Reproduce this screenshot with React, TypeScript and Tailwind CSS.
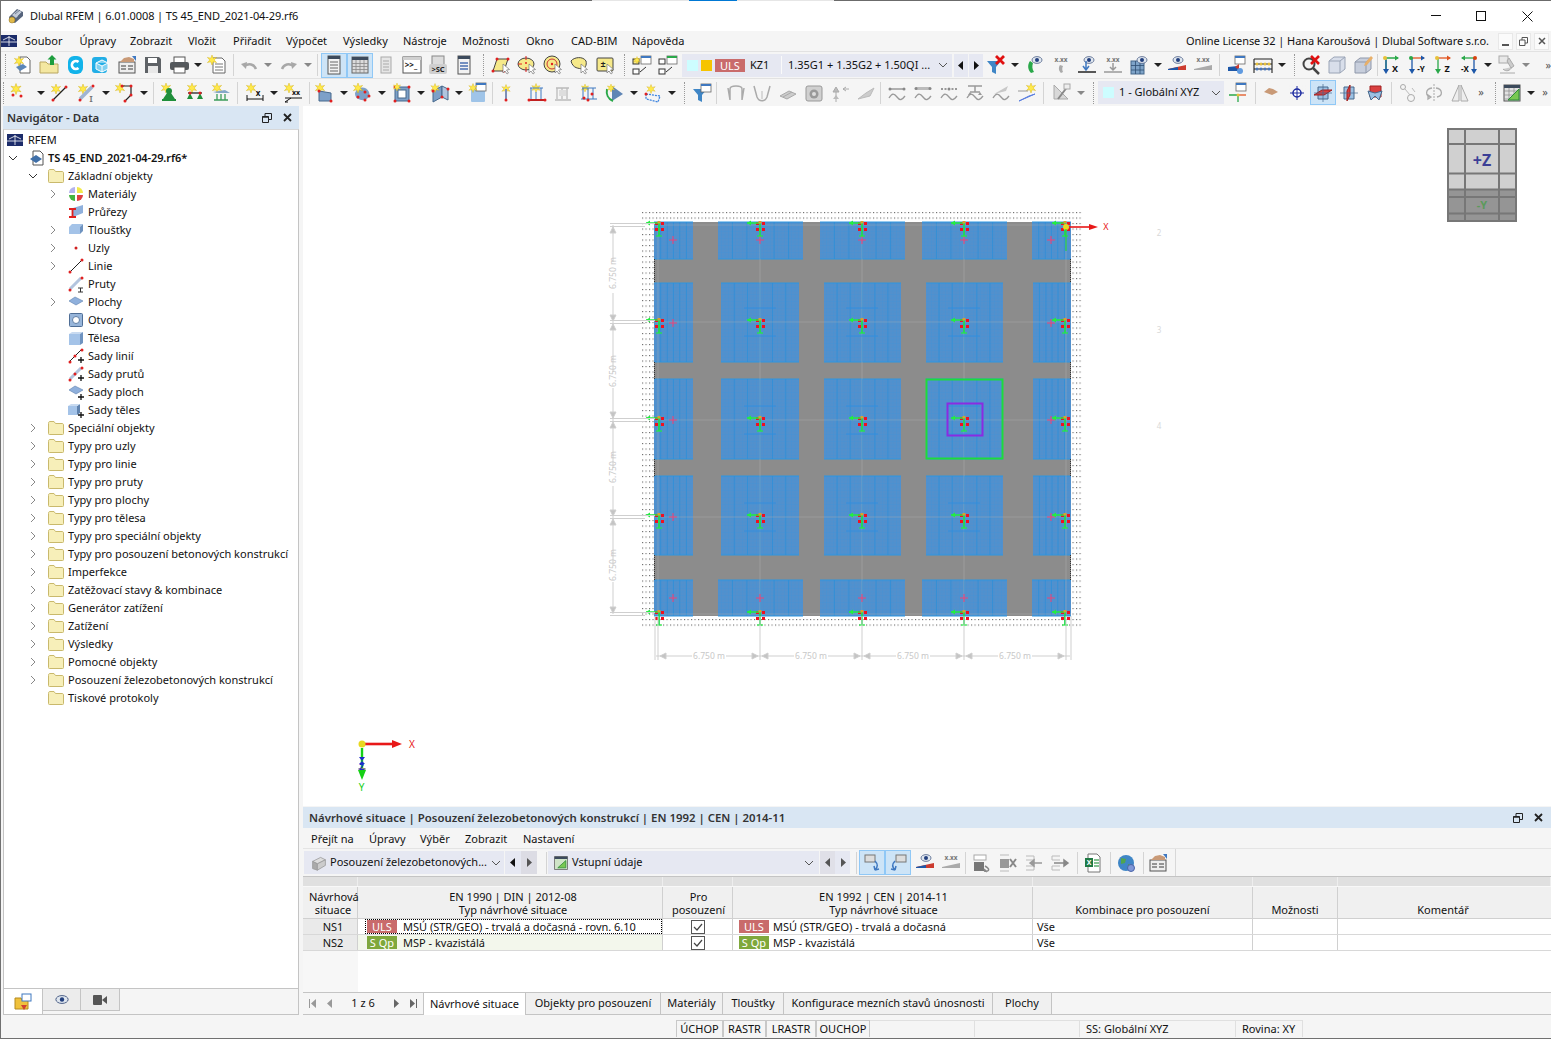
import React from "react";

const St = ({ x = 5, y = 5, s = 1 }: { x?: number; y?: number; s?: number }) => (
  <path transform={`translate(${x} ${y}) scale(${s})`} fill="#ffe94a" stroke="#cfa800" strokeWidth=".4" d="M0-5 1.2-1.8 4.6-2.6 2.2 0 4.6 2.6 1.2 1.8 0 5-1.2 1.8-4.6 2.6-2.2 0-4.6-2.6-1.2-1.8Z" />
);
const Dt = ({ x, y, c = "#e02020", r = 1.5 }: { x: number; y: number; c?: string; r?: number }) => <circle cx={x} cy={y} r={r} fill={c} />;
const Cur = () => <path d="M12 9l0 9 2-2 2 3 1.5-1-2-3 3-.5z" fill="#fff" stroke="#777" strokeWidth=".7" />;
const T = ({ x, y, s = 6.5, c = "#666", w = 700, t }: { x: number; y: number; s?: number; c?: string; w?: number; t: string }) => (
  <text x={x} y={y} fontSize={s} fill={c} fontWeight={w} textAnchor="middle">{t}</text>
);
const Xx = ({ c = "#777" }: { c?: string }) => <T x={10} y={7} t="x.xx" c={c} />;
const wave = (c: string) => <path d="M2 15c3-5 5-5 8-1s5 3 8-1" fill="none" stroke={c} strokeWidth="1.3" />;
const Win = ({ x = 9, y = 1, c = "#3f78c0" }: { x?: number; y?: number; c?: string }) => (
  <g><rect x={x} y={y} width="10" height="8" fill="#fff" stroke="#666" strokeWidth=".8" /><rect x={x} y={y} width="10" height="2" fill={c} /></g>
);
const Eye = ({ x = 13, y = 4 }: { x?: number; y?: number }) => (
  <g><ellipse cx={x} cy={y} rx="5" ry="3.4" fill="#dfe6ee" stroke="#3a4f7a" strokeWidth=".7" /><circle cx={x} cy={y} r="2" fill="#23407e" /></g>
);

const I: Record<string, React.ReactNode> = {
  newdoc: <><path d="M7 2h7l3 3v13H7z" fill="#fff" stroke="#666" /><path d="M3 12l7-3 4 3-7 4z" fill="#5b86b8" /><St x={6} y={6} /></>,
  open: <><path d="M1 7h6l2 2h10v9H1z" fill="#f4e7a1" stroke="#b9a660" /><path d="M13 0l4.5 4.5H15V10h-4V4.500H8.500z" fill="#1e9e3e" /></>,
  cee: <><rect x="3" y="1" width="15" height="18" rx="6" fill="#12b3ea" /><path d="M13.500 7a4 4 0 1 0 0 6" fill="none" stroke="#fff" strokeWidth="2.600" /></>,
  cubeI: <><rect x="1" y="2" width="15" height="16" rx="3" fill="#22aee6" /><path d="M11 5l6 3v6l-6 3-6-3V8zM11 11v6M5 8l6 3 6-3" fill="#7fd0f0" stroke="#fff" /></>,
  hand: <><rect x="2" y="7" width="16" height="11" fill="#eee" stroke="#555" /><path d="M4 11h5M11 11h5M4 14h5M11 14h5" stroke="#777" strokeWidth="1.500" /><path d="M3 7l4-4 5-1 5 2v3z" fill="#c99a77" /><path d="M15 1h4v5z" fill="#3f78c0" /></>,
  save: <><path d="M2 2h14l2 2v14H2z" fill="#5e6266" /><rect x="5" y="3" width="9" height="5" fill="#fff" /><rect x="5" y="11" width="10" height="7" fill="#e8e8e8" /></>,
  print: <><rect x="5" y="2" width="11" height="6" fill="#fff" stroke="#555" /><rect x="1" y="7" width="19" height="8" rx="2" fill="#55595d" /><rect x="5" y="12" width="11" height="6" fill="#fff" stroke="#555" /></>,
  newrep: <><path d="M6 3h9l3 3v12H6z" fill="#fff" stroke="#666" /><path d="M8 9h8M8 12h8M8 15h8" stroke="#777" /><St x={5} y={5} /></>,
  undo: <><path d="M17 14c-2-5-7-6-12-3" fill="none" stroke="#a8a8a8" strokeWidth="2.500" /><path d="M2 9l6-2-1 7z" fill="#a8a8a8" /></>,
  redo: <><path d="M3 14c2-5 7-6 12-3" fill="none" stroke="#a8a8a8" strokeWidth="2.500" /><path d="M18 9l-6-2 1 7z" fill="#a8a8a8" /></>,
  win: <><rect x="4" y="1" width="12" height="18" fill="#f2f2f2" stroke="#555" /><rect x="4" y="1" width="12" height="3" fill="#3c4a5c" /><path d="M6 7h8M6 10h8M6 13h8M6 16h8" stroke="#666" /></>,
  tbl: <><rect x="2" y="2" width="16" height="16" fill="#dcdcdc" stroke="#666" /><rect x="2" y="2" width="16" height="3" fill="#3c4a5c" /><path d="M2 8.500h16M2 11.500h16M2 14.500h16M6 5v13M10 5v13M14 5v13" stroke="#888" strokeWidth=".8" /></>,
  docg: <><rect x="5" y="2" width="10" height="16" fill="#e6e6e6" stroke="#aaa" /><path d="M7 6h6M7 9h6M7 12h6M7 15h6" stroke="#aaa" /></>,
  con: <><rect x="1" y="2" width="18" height="16" fill="#fff" stroke="#555" /><rect x="1" y="2" width="18" height="3" fill="#d0d0d0" /><T x={9} y={13} s={8} c="#222" t=">>_" /></>,
  sc: <><rect x="4" y="1" width="12" height="9" fill="#ddd" stroke="#888" /><rect x="1" y="9" width="18" height="10" rx="2" fill="#cfcfcf" /><T x={10} y={17} s={7.500} c="#222" t=">SC" /></>,
  lst: <><rect x="4" y="1" width="12" height="18" fill="#f2f2f2" stroke="#555" /><rect x="4" y="1" width="12" height="3" fill="#3c4a5c" /><path d="M6 8h8M6 11h8M6 14h8" stroke="#4a6fb0" strokeWidth="1.500" /></>,
  para: <><path d="M6 4h11l-4 12H2z" fill="#f6e98a" stroke="#444" /><Dt x={6} y={4} /><Dt x={17} y={4} /><Dt x={2} y={16} /><Dt x={13} y={16} /><Cur /></>,
  cir: <><ellipse cx="9" cy="9" rx="8" ry="6" fill="#f6e98a" stroke="#444" /><path d="M9 1v4M9 12v5M1 9h4" stroke="#e02020" /><Dt x={9} y={8} r={1} /><Cur /></>,
  tgt: <><circle cx="9" cy="9" r="8" fill="#f6e98a" stroke="#444" /><circle cx="9" cy="9" r="5" fill="none" stroke="#c33" /><Dt x={9} y={9} r={1.200} /><Cur /></>,
  blob: <><path d="M2 6c3-4 12-5 15 0 1 4-1 8-4 8-3-1-9 0-11-8z" fill="#f6e98a" stroke="#444" /><Cur /></>,
  yel: <><rect x="2" y="3" width="16" height="13" rx="1" fill="#f6e98a" stroke="#444" /><T x={8} y={12} s={9} c="#222" t="±" /><Cur /></>,
  conn1: <><Win /><rect x="1" y="14" width="6" height="5" fill="#fff" stroke="#333" /><rect x="1" y="4" width="6" height="5" fill="#f6e98a" stroke="#333" /><path d="M8 17l6-5" stroke="#333" /><St x={5} y={5} s={.7} /></>,
  conn2: <><Win c="#2aa84a" /><rect x="1" y="14" width="6" height="5" fill="#fff" stroke="#333" /><rect x="1" y="4" width="6" height="5" fill="#fff" stroke="#333" /><path d="M8 17l6-5" stroke="#333" /></>,
  fil: <><path d="M1 6h14l-5 6v7l-4-2v-5z" fill="#3f86c6" /><path d="M10 1l8 8M18 1l-8 8" stroke="#e01010" strokeWidth="2.800" /></>,
  eyeb: <><path d="M5 6c-3 4-2 9 1 12l3-1c-2-3-2-6-1-9z" fill="#2aa84a" /><Eye x={12} y={5} /></>,
  xc: <><Xx /><path d="M9 10c-2 3-1 6 1 8l2-1c-1-2-1-4 0-6z" fill="#aaa" /></>,
  le: <><Eye x={12} y={5} /><path d="M9 6v8M6 11l3 4 3-4" fill="none" stroke="#3f78c0" strokeWidth="1.500" /><path d="M1 17h18" stroke="#222" strokeWidth="1.500" /></>,
  lg: <><Xx /><path d="M10 8v7M7 12l3 3 3-3" fill="none" stroke="#999" strokeWidth="1.500" /><path d="M1 17h18" stroke="#999" strokeWidth="1.500" /></>,
  ge: <><rect x="2" y="6" width="13" height="13" fill="#7ea3c8" stroke="#46688c" /><path d="M2 10.500h13M2 15h13M6.500 6v13M11 6v13" stroke="#2e4e72" strokeWidth=".8" /><Eye x={13} y={5} /></>,
  le2: <><Eye x={11} y={5} /><path d="M1 14l18-4v5H1z" fill="#cc3b2f" /><path d="M1 14l10-2v3H1z" fill="#1d57a8" /></>,
  lg2: <><Xx /><path d="M1 14l18-4v5H1z" fill="#aaa" /></>,
  wb: <><Win x={8} y={1} /><path d="M1 12l10-1v5H1z" fill="#1d57a8" /><path d="M8 12l4-3v6z" fill="#cc3b2f" /><circle cx="13" cy="16" r="3" fill="#5f9ae0" /></>,
  aba: <><path d="M1 4h18M1 18V4M19 18V4M1 9h18M1 14h18" stroke="#222" strokeWidth="1.100" fill="none" /><path d="M4 9h.01M8 9h.01M12 9h.01M16 9h.01" stroke="#e8c13a" strokeWidth="3" strokeLinecap="round" /><path d="M4 14h.01M8 14h.01M12 14h.01M16 14h.01" stroke="#4a76b8" strokeWidth="3" strokeLinecap="round" /></>,
  magx: <><circle cx="8" cy="9" r="5.500" fill="#f4f4f4" stroke="#444" strokeWidth="2" /><path d="M12 13l6 6" stroke="#444" strokeWidth="2.500" /><path d="M10 1l8 8M18 1l-8 8" stroke="#e01010" strokeWidth="2.600" /></>,
  cube1: <><path d="M2 6l5-4h11v12l-5 4H2z" fill="#d8deea" stroke="#9aa4b6" /><path d="M2 6h11v12M13 6l5-4" fill="none" stroke="#9aa4b6" /></>,
  cube2: <><path d="M2 7l5-4h11v11l-5 4H2z" fill="#c7cedc" stroke="#8f98aa" /><path d="M2 7h11v11M13 7l5-4" fill="none" stroke="#8f98aa" /><path d="M18 1l-6 7-1 3 3-1 6-7z" fill="#e8b06a" /></>,
  ax1: <><path d="M5 3v14M5 3h12" stroke="#2aa84a" strokeWidth="1.300" /><path d="M5 19l-3-5h6z" fill="#1d57a8" /><path d="M5 5v10" stroke="#1d57a8" strokeWidth="1.300" /><path d="M18 3l-4-2.500v5z" fill="#2aa84a" /><Dt x={4} y={3} c="#e8c13a" r={2} /><T x={14} y={17} s={9} c="#111" t="X" /></>,
  ax2: <><path d="M5 3h12" stroke="#e0541f" strokeWidth="1.300" /><path d="M5 3v12" stroke="#1d57a8" strokeWidth="1.300" /><path d="M5 19l-3-5h6zM18 3l-4-2.500v5z" fill="#1d57a8" /><Dt x={4} y={3} c="#2aa84a" r={2} /><T x={14} y={17} s={8} c="#111" t="-Y" /></>,
  ax3: <><path d="M5 3h12" stroke="#e0541f" strokeWidth="1.300" /><path d="M5 3v12" stroke="#2aa84a" strokeWidth="1.300" /><path d="M5 19l-3-5h6z" fill="#2aa84a" /><path d="M18 3l-4-2.500v5z" fill="#e0541f" /><Dt x={4} y={3} c="#e8c13a" r={2} /><T x={14} y={17} s={9} c="#111" t="Z" /></>,
  ax4: <><path d="M3 3h12" stroke="#2aa84a" strokeWidth="1.300" /><path d="M15 3v12" stroke="#1d57a8" strokeWidth="1.300" /><path d="M15 19l-3-5h6z" fill="#1d57a8" /><path d="M2 3l4-2.500v5z" fill="#2aa84a" /><Dt x={16} y={3} c="#d8420f" r={2} /><T x={6} y={17} s={8} c="#111" t="-X" /></>,
  micro: <><rect x="2" y="1" width="9" height="7" fill="#e8e8e8" stroke="#aaa" /><path d="M12 3l5 8-3 2-4-7zM3 18h15M6 14c3 3 7 2 9-2" fill="#ccc" stroke="#aaa" /></>,
  star: <><St x={7} y={6} s={1.100} /><Dt x={4} y={12} /><Dt x={12} y={13} /></>,
  line: <><St x={6} y={6} /><path d="M3 17L16 4" stroke="#222" strokeWidth="1.200" /><Dt x={3} y={17} /><Dt x={16} y={4} /></>,
  mem: <><St x={6} y={6} /><path d="M3 16L15 4" stroke="#9fb4d2" strokeWidth="3.500" /><Dt x={3} y={17} /><Dt x={16} y={3} /><T x={14} y={19} s={8} c="#777" t="I" /></>,
  clp: <><St x={5} y={5} /><path d="M7 3h9v9l-6 6" fill="none" stroke="#222" strokeWidth="1.200" /><Dt x={7} y={3} /><Dt x={16} y={3} /><Dt x={16} y={12} /><Dt x={10} y={18} /></>,
  sup: <><St x={7} y={5} /><path d="M10 7l6 9H4z" fill="#1f8f3a" /><circle cx="10" cy="8" r="3" fill="#1f8f3a" /><path d="M3 17h14" stroke="#1f8f3a" strokeWidth="2" /></>,
  sup2: <><St x={7} y={5} /><path d="M3 10h14" stroke="#222" strokeWidth="1.300" /><path d="M5 10l3 6H2zM15 10l3 6h-6z" fill="#1f8f3a" /><Dt x={5} y={10} /><Dt x={15} y={10} /></>,
  sup3: <><St x={6} y={5} /><path d="M2 9l12-2 5 3H6z" fill="#86a8c8" /><path d="M6 11v6M10 11v6M14 11v6M3 17h14" stroke="#3d9c5a" strokeWidth="1.300" /></>,
  dimx: <><St x={6} y={5} /><T x={13} y={13} s={8} c="#111" t="x" /><path d="M2 12v6M18 12v6M2 16h16" stroke="#111" /></>,
  dimxx: <><St x={6} y={5} /><T x={13} y={12} s={7} c="#111" t="xx" /><path d="M2 15h17M2 19l6-4M2 19l3 0" stroke="#111" /></>,
  surf: <><St x={5} y={5} /><path d="M4 8l12 2v8H4z" fill="#7da0c8" stroke="#46688c" /><Dt x={4} y={8} /><Dt x={16} y={18} /></>,
  surf2: <><path d="M2 10c3-7 11-7 14-1 2 5-3 9-8 8-4-1-6-3-6-7z" fill="#7da0c8" /><St x={5} y={5} /><Dt x={5} y={14} /><Dt x={12} y={9} /><Dt x={16} y={13} /><Dt x={12} y={17} /></>,
  opn: <><rect x="3" y="4" width="14" height="14" fill="#7da0c8" stroke="#46688c" /><rect x="6" y="7" width="8" height="8" fill="#fff" stroke="#46688c" /><Dt x={3} y={4} /><Dt x={17} y={4} /><Dt x={3} y={18} /><Dt x={17} y={18} /><St x={5} y={4} s={.8} /></>,
  sol2: <><path d="M3 8l9-5v11l-9 5z" fill="#7da0c8" stroke="#46688c" /><path d="M12 3l6 3v11l-6-3z" fill="#b0c4de" stroke="#46688c" /><St x={5} y={5} s={.9} /><Dt x={3} y={8} /><Dt x={12} y={14} /><Dt x={18} y={6} /></>,
  box: <><rect x="3" y="5" width="14" height="14" rx="1" fill="#9fc4e8" /><Win x={8} y={0} /><St x={5} y={5} s={.9} /></>,
  pin: <><St x={8} y={6} s={.9} /><path d="M8 6v10" stroke="#7d8fb5" strokeWidth="2" /><Dt x={8} y={17} /></>,
  brg: <><St x={9} y={5} s={.9} /><path d="M2 17h16" stroke="#c02020" strokeWidth="2" /><path d="M4 5v11M9 9v7M14 5v11M3 5h13" stroke="#3f78c0" fill="none" /><Dt x={2} y={17} /><Dt x={18} y={17} /></>,
  brgg: <><path d="M2 17h16M4 5v11M9 5v11M14 5v11M3 5h13" stroke="#bbb" strokeWidth="1.300" fill="none" /><rect x="6" y="7" width="7" height="6" fill="#ddd" /></>,
  brg2: <><St x={6} y={5} s={.8} /><path d="M4 5v11M9 5v11M14 5v11M3 5h14M2 16h16" stroke="#3f78c0" fill="none" /><Dt x={5} y={15} /><Dt x={13} y={11} /><Dt x={9} y={17} /></>,
  tri: <><path d="M7 3l11 8-11 7z" fill="#5f85b5" /><path d="M2 6c-1 5 1 10 6 12" fill="none" stroke="#2aa84a" strokeWidth="2" /><St x={6} y={5} s={.8} /></>,
  dash: <><St x={8} y={6} s={.9} /><path d="M3 11l14 2-2 6-12-3z" fill="none" stroke="#3f86e0" strokeDasharray="2 1" strokeWidth="1.300" /><Dt x={3} y={11} /></>,
  filw: <><path d="M1 6h14l-5 6v7l-4-2v-5z" fill="#3f86c6" /><Win /></>,
  g1: <><path d="M4 17V6c0-4 12-4 12 0v11M2 5l2 12M18 5l-2 12" fill="none" stroke="#aaa" strokeWidth="1.500" /></>,
  g2: <><path d="M2 3l3 11c2 5 8 5 10 0l3-11" fill="none" stroke="#aaa" strokeWidth="1.500" /><path d="M10 8v8" stroke="#bbb" /></>,
  g3: <><path d="M2 13l9-5 7 3-9 5zM5 14l9-5" fill="#ccc" stroke="#aaa" /></>,
  g4: <><rect x="2" y="3" width="16" height="15" rx="2" fill="#d0d0d0" stroke="#999" /><circle cx="10" cy="11" r="4.500" fill="#999" /><circle cx="10" cy="11" r="2" fill="#ddd" /></>,
  g5: <><path d="M6 4l3 5H3zM6 9v10M13 6h6M13 6l3-2M13 6l3 2" stroke="#aaa" fill="#bbb" /><path d="M6 12l3 4H3z" fill="#bbb" /></>,
  g6: <><path d="M2 16l8-6 8-5-4 8z" fill="#ccc" stroke="#bbb" /></>,
  w1: <><path d="M2 6h16" stroke="#999" strokeWidth="1.500" /><Dt x={3} y={6} c="#888" /><Dt x={17} y={6} c="#888" />{wave("#999")}</>,
  w2: <><rect x="3" y="4" width="14" height="3" fill="#bbb" /><Dt x={3} y={5.500} c="#888" /><Dt x={17} y={5.500} c="#888" />{wave("#999")}</>,
  w3: <><path d="M2 6h16" stroke="#999" strokeDasharray="2 1.500" strokeWidth="2" /><Dt x={10} y={6} c="#888" />{wave("#999")}</>,
  w4: <><path d="M3 3h14M10 3v6M5 9h10" stroke="#999" strokeWidth="1.500" /><path d="M5 9l-2 3h4zM15 9l-2 3h4z" fill="#999" />{wave("#999")}</>,
  w5: <><path d="M3 11l14-8-2 5z" fill="#c8c8c8" />{wave("#999")}</>,
  w6: <><St x={14} y={5} /><path d="M1 8h10" stroke="#999" /><path d="M2 18l16-7-6 2z" fill="#5b7fe0" stroke="#5b7fe0" /></>,
  gset: <><path d="M2 2l14 14H2z" fill="#d8d8d8" stroke="#aaa" /><path d="M16 3L6 16" stroke="#888" strokeWidth="2" /><rect x="12" y="1" width="6" height="5" fill="#eee" stroke="#aaa" /></>,
  cs: <><Win x={8} y={0} /><path d="M10 12H1M10 12v7" stroke="#2aa84a" strokeWidth="1.300" /><path d="M10 12h8" stroke="#e0541f" strokeWidth="1.300" /><Dt x={10} y={12} c="#e8c13a" /></>,
  hg: <><path d="M3 9l5-4 4 1 5 3-6 3z" fill="#c99a77" /><path d="M2 11h.01M5 11h.01M8 11h.01M11 11h.01M14 11h.01M17 11h.01M2 14h.01M5 14h.01M8 14h.01M11 14h.01M14 14h.01M17 14h.01M2 17h.01M5 17h.01M8 17h.01M11 17h.01M14 17h.01M17 17h.01" stroke="#666" strokeWidth="1.600" /></>,
  hg2: <><path d="M2 3h.01M5 3h.01M8 3h.01M12 3h.01M15 3h.01M18 3h.01M2 6h.01M5 6h.01M15 6h.01M18 6h.01M2 14h.01M5 14h.01M15 14h.01M18 14h.01M2 17h.01M5 17h.01M8 17h.01M12 17h.01M15 17h.01M18 17h.01" stroke="#777" strokeWidth="1.500" /><circle cx="10" cy="10" r="4" fill="#fff" stroke="#1c2aa0" strokeWidth="1.500" /><path d="M10 3v14M3 10h14" stroke="#1c2aa0" /></>,
  vw1: <><path d="M5 4l10 0 0 12-10 0z" fill="#9cc1e3" stroke="#46688c" /><path d="M1 12l8-5h10l-8 5z" fill="#d94040" stroke="#a02020" /><path d="M10 1v18M1 10h18" stroke="#46688c" strokeWidth=".7" /></>,
  vw2: <><path d="M5 4h10v12H5z" fill="#9cc1e3" stroke="#46688c" /><path d="M11 2l-3 6v10l3-6z" fill="#d94040" stroke="#a02020" /><path d="M1 10h18" stroke="#46688c" strokeWidth=".7" /></>,
  vw3: <><path d="M5 3h11v11H5z" fill="#d94040" stroke="#a02020" /><path d="M3 8l7 2 7-2-3 9-4-4-4 4z" fill="#9cc1e3" stroke="#46688c" /></>,
  gn1: <><circle cx="5" cy="4" r="2.500" fill="none" stroke="#aaa" /><circle cx="13" cy="15" r="3.500" fill="none" stroke="#aaa" /><path d="M7 6l5 6M14 5l3 4" stroke="#bbb" /></>,
  gn2: <><path d="M10 1v18" stroke="#aaa" strokeDasharray="2 1" /><path d="M8 5C1 6 1 13 7 14M7 14l-3-2v4zM12 5c7 1 7 8 1 9" fill="none" stroke="#aaa" strokeWidth="1.300" /></>,
  gn3: <><path d="M9 2L2 18h7zM11 2l7 16h-7z" fill="#eee" stroke="#aaa" /></>,
  tb3: <><rect x="2" y="2" width="16" height="16" fill="#e2e2e2" stroke="#555" /><rect x="2" y="2" width="16" height="3" fill="#3c4a5c" /><path d="M2 8h16M2 12h16M2 16h16M7 5v13M12 5v13" stroke="#888" strokeWidth=".7" /><path d="M17 6v11H6z" fill="#79c853" stroke="#2e8b3a" /></>,
  cube3: <><path d="M2 8l10-5 6 3-10 5z" fill="#ddd" stroke="#999" /><path d="M2 8v9l6 2v-8z" fill="#aaa" stroke="#999" /><path d="M8 11v8l10-6V6z" fill="#ccc" stroke="#999" /></>,
  gb1: <><rect x="2" y="2" width="12" height="5" fill="#fff" stroke="#aaa" /><rect x="2" y="9" width="10" height="9" fill="#777" /><path d="M13 13c5 3 5 6-1 5M12 16l3 3" fill="none" stroke="#888" strokeWidth="1.500" /></>,
  gb2: <><path d="M2 2h9M2 18h9" stroke="#bbb" /><rect x="2" y="6" width="9" height="9" fill="#999" /><path d="M12 6l6 8M18 6l-6 8" stroke="#888" strokeWidth="2" /></>,
  gb3: <><path d="M2 3h8M2 17h8M2 7h8M2 13h8M10 3v4M10 13v4" stroke="#bbb" /><path d="M18 10H6M6 10l4-3v6z" stroke="#999" fill="#999" strokeWidth="1.500" /></>,
  gb4: <><path d="M2 3h8M2 17h8M2 7h8M2 13h8M2 3v4M2 13v4" stroke="#bbb" /><path d="M4 10h12M18 10l-4-3v6z" stroke="#888" fill="#888" strokeWidth="1.500" /></>,
  xls: <><path d="M5 1h9l3 3v15H5z" fill="#fff" stroke="#777" /><rect x="2" y="5" width="8" height="9" fill="#1f7a44" /><T x={6} y={12} s={7} c="#fff" t="X" /><path d="M11 7h5M11 10h5M11 13h5" stroke="#5fae6f" strokeWidth="1.500" /></>,
  globe: <><circle cx="10" cy="10" r="8" fill="#3f86c6" /><path d="M5 5l5 1-1 4-4 1zM12 11l4 1-2 4-2-2z" fill="#4fa54f" /><circle cx="15" cy="15" r="3.500" fill="#7f97d8" stroke="#4a64a8" /></>,
  sel1: <><rect x="3" y="2" width="10" height="7" fill="#ddd" stroke="#777" /><path d="M13 8c3 3 3 6 0 9M13 17l-1-4M13 17l4-1" fill="none" stroke="#3f78c0" strokeWidth="1.500" /></>,
  sel2: <><rect x="8" y="2" width="10" height="7" fill="#ddd" stroke="#777" /><path d="M7 8c-3 3-3 6 0 9M7 17l1-4M7 17l-4-1" fill="none" stroke="#3f78c0" strokeWidth="1.500" /></>,
  tb4: <><rect x="2" y="2" width="16" height="16" fill="#cfe4c8" stroke="#666" /><rect x="2" y="2" width="16" height="3" fill="#3c4a5c" /><path d="M16 7v9H6z" fill="#79c853" stroke="#2e8b3a" /></>,
};

const Ico = ({ n, s = 20 }: { n: string; s?: number }) => (
  <svg viewBox="0 0 20 20" width={s} height={s} className="shrink-0 overflow-visible">{I[n]}</svg>
);

const spacers: Record<string, string> = { s1: "w-px", s2: "w-0.5", s3: "w-[3px]", s5: "w-[5px]" };

const Tool = ({ tokens }: { tokens: string }) => (
  <>
    {tokens.trim().split(/\s+/).map((t, i) => {
      if (spacers[t]) return <span key={i} className={`${spacers[t]} shrink-0`} />;
      if (t === "v") return <span key={i} className="w-3 shrink-0 flex justify-center"><span className="w-0 h-0 border-x-4 border-t-4 border-x-transparent border-t-[#222]" /></span>;
      if (t === "u") return <span key={i} className="w-3 shrink-0 flex justify-center"><span className="w-0 h-0 border-x-4 border-t-4 border-x-transparent border-t-[#888]" /></span>;
      if (t === "|") return <span key={i} className="w-1.5 shrink-0 flex justify-center"><span className="w-px h-[22px] bg-[#d4d4d4]" /></span>;
      if (t === "i") return <span key={i} className="w-0.5 shrink-0 flex justify-center"><span className="w-px h-[22px] bg-[#d4d4d4]" /></span>;
      if (t === "g") return <span key={i} className="w-2.5 shrink-0 h-full flex items-center justify-center pl-[2px]"><span className="h-[22px] w-px border-l border-dotted border-[#999]" /></span>;
      if (t === "»") return <span key={i} className="w-4 shrink-0 text-center text-[11px] text-[#555]">»</span>;
      if (t[0] === "*") return <span key={i} className="w-[26px] h-[25px] shrink-0 flex items-center justify-center bg-[#cde4f7] border border-[#90c8f6]"><Ico n={t.slice(1)} /></span>;
      return <span key={i} className="w-[26px] shrink-0 flex items-center justify-center"><Ico n={t} /></span>;
    })}
  </>
);

const Tri = ({ d, c = "#111" }: { d: "l" | "r"; c?: string }) => (
  <svg width="8" height="9" viewBox="0 0 8 9"><path d={d === "l" ? "M6 0v9L1 4.500z" : "M2 0v9l5-4.500z"} fill={c} /></svg>
);
const Chev = ({ c = "#555" }: { c?: string }) => (
  <svg width="10" height="6" viewBox="0 0 10 6"><path d="M1 1l4 4 4-4" fill="none" stroke={c} /></svg>
);

const menus: [string, string][] = [
  ["Soubor", "w-[54.500px]"], ["Úpravy", "w-[50.500px]"], ["Zobrazit", "w-[58px]"], ["Vložit", "w-[45px]"], ["Přiřadit", "w-[53px]"],
  ["Výpočet", "w-[57px]"], ["Výsledky", "w-[60px]"], ["Nástroje", "w-[59px]"], ["Možnosti", "w-[64px]"], ["Okno", "w-[45px]"], ["CAD-BIM", "w-[61px]"], ["Nápověda", "w-[70px]"],
];

const Logo = () => (
  <svg width="16" height="12" viewBox="0 0 16 12"><rect width="16" height="12" fill="#1c2c6a" /><path d="M0 7h16M8 1v10M2 5l6-3 6 3" stroke="#fff" strokeWidth=".8" fill="none" /></svg>
);
const Folder = () => (
  <svg width="16" height="14" viewBox="0 0 16 14"><path d="M.5 2.500C.5 1 1 .5 2 .5h4l1.500 2H14c1 0 1.500.5 1.500 1.500v8.500c0 1-.5 1-1 1H1.500c-1 0-1-.5-1-1z" fill="#f7efb9" stroke="#c9b96c" /></svg>
);

const navIcons: Record<string, React.ReactNode> = {
  mat: <><path d="M7 7V1a6 6 0 0 0-6 6z" fill="#b4b4ee" /><path d="M9 7V1a6 6 0 0 1 6 6z" fill="#f2e94a" /><path d="M7 9v6a6 6 0 0 1-6-6z" fill="#45b53f" /><path d="M9 9v6a6 6 0 0 0 6-6z" fill="#e04040" /></>,
  pru: <><path d="M5 4l10-3v8L5 13z" fill="#8fb0dc" /><path d="M1 5h7M1 13h7M4.500 5v8" stroke="#e02020" strokeWidth="1.800" /></>,
  tl: <><path d="M1 5l3-3h11l-3 3zM1 5h11v7H1z" fill="#a4c3e8" /><path d="M12 5l3-3v7l-3 3z" fill="#6f93c0" /></>,
  uz: <circle cx="8" cy="8" r="1.500" fill="#d02020" />,
  li: <><path d="M2 14L14 2" stroke="#222" /><Dt x={2} y={14} /><Dt x={14} y={2} /></>,
  pr: <><path d="M2 13L13 2" stroke="#b3c4de" strokeWidth="3" /><Dt x={2} y={14} /><Dt x={14} y={2} /><path d="M10 12h5M10 16h5M12.500 12v4" stroke="#333" /></>,
  pl: <path d="M1 7l6-4 8 4-7 4z" fill="#8fb0dc" stroke="#5f82ae" strokeWidth=".6" />,
  ot: <><rect x="1.500" y="1.500" width="13" height="13" rx="1" fill="#97b5da" stroke="#4f6e96" /><circle cx="8" cy="8" r="3.500" fill="#fff" stroke="#5f7ea5" /></>,
  te: <><path d="M1 4l3-2h11l-3 2z" fill="#c8daf0" /><path d="M1 4h11v11H1z" fill="#a4c3e8" /><path d="M12 4l3-2v11l-3 2z" fill="#6f93c0" /></>,
  sli: <><path d="M1 14L14 1" stroke="#222" /><Dt x={2} y={14} /><Dt x={7} y={8} /><Dt x={14} y={2} /><path d="M13 9v6M10 12h6" stroke="#111" strokeWidth="1.300" /></>,
  spr: <><path d="M2 13L13 2" stroke="#b3c4de" strokeWidth="3" /><Dt x={2} y={14} /><Dt x={7} y={8} /><Dt x={14} y={2} /><path d="M13 9v6M10 12h6" stroke="#111" strokeWidth="1.300" /></>,
  spl: <><path d="M1 6l6-4 8 4-7 4z" fill="#8fb0dc" stroke="#5f82ae" strokeWidth=".6" /><path d="M13 10v6M10 13h6" stroke="#111" strokeWidth="1.300" /></>,
  ste: <><path d="M0 4h9v9H0z" fill="#a4c3e8" /><path d="M9 4l3-2v9l-3 2z" fill="#5f82ae" /><path d="M0 4l3-2h9L9 4z" fill="#c8daf0" /><path d="M13 10v6M10 13h6" stroke="#111" strokeWidth="1.300" /></>,
};

type Row = { l: number; t: string; c?: boolean; i?: string };
const tree: Row[] = [
  ...[
    ["Materiály", "mat", 1], ["Průřezy", "pru", 0], ["Tloušťky", "tl", 1], ["Uzly", "uz", 1], ["Linie", "li", 1], ["Pruty", "pr", 0], ["Plochy", "pl", 1], ["Otvory", "ot", 0],
    ["Tělesa", "te", 0], ["Sady linií", "sli", 0], ["Sady prutů", "spr", 0], ["Sady ploch", "spl", 0], ["Sady těles", "ste", 0],
  ].map(([t, i, c]) => ({ l: 3, t: t as string, i: i as string, c: !!c })),
  ...["Speciální objekty", "Typy pro uzly", "Typy pro linie", "Typy pro pruty", "Typy pro plochy", "Typy pro tělesa", "Typy pro speciální objekty", "Typy pro posouzení betonových konstrukcí", "Imperfekce", "Zatěžovací stavy & kombinace", "Generátor zatížení", "Zatížení", "Výsledky", "Pomocné objekty", "Posouzení železobetonových konstrukcí"].map((t) => ({ l: 2, t, c: true })),
  { l: 2, t: "Tiskové protokoly" },
];

const WinBtns = () => (
  <span className="flex items-center gap-[11px]">
    <svg width="10" height="10" viewBox="0 0 10 10"><path d="M.5 3.500h6v6h-6zM3 3V.5h6.500v6H7" fill="none" stroke="#222" /><path d="M.5 4h6" stroke="#222" strokeWidth="1.500" /></svg>
    <svg width="9" height="9" viewBox="0 0 9 9"><path d="M1 1l7 7M8 1L1 8" stroke="#222" strokeWidth="1.800" /></svg>
  </span>
);

const Navigator = () => (
  <div className="w-[300px] shrink-0 flex flex-col pl-[2px] pr-[2px] pb-[3px]">
    <div className="h-[23px] bg-[#d9e6f3] flex items-center pl-[4px] pr-[7px] shrink-0">
      <span className="text-[11.500px] font-semibold text-[#333] flex-1">Navigátor - Data</span>
      <WinBtns />
    </div>
    <div className="flex-1 bg-white border border-[#c4c4c4] border-t-[#d8d8d8] pt-[1px] min-h-0 whitespace-nowrap">
      <div className="h-[18px] flex items-center pl-[3px] gap-[5px]"><Logo /><span>RFEM</span></div>
      <div className="h-[18px] flex items-center">
        <span className="w-[18px] flex justify-center"><Chev c="#333" /></span>
        <svg width="16" height="16" viewBox="0 0 16 16" className="ml-[7px]"><path d="M4 1h7l3 3v11H4z" fill="#fff" stroke="#555" /><path d="M1 9l6-4 6 4-6 4z" fill="#3f6fa8" /></svg>
        <span className="font-semibold ml-[3px] tracking-[-0.1px]">TS 45_END_2021-04-29.rf6*</span>
      </div>
      <div className="h-[18px] flex items-center pl-[20px]">
        <span className="w-[18px] mr-[6px] flex justify-center"><Chev c="#333" /></span>
        <span className="w-[20px] flex"><Folder /></span>
        <span>Základní objekty</span>
      </div>
      {tree.map((r, k) => (
        <div key={k} className={`h-[18px] flex items-center ${r.l === 3 ? "pl-[40px]" : "pl-[20px]"}`}>
          <span className="w-[18px] mr-[6px] flex justify-center">{r.c && <svg width="6" height="10" viewBox="0 0 6 10"><path d="M1 1l4 4-4 4" fill="none" stroke="#888" /></svg>}</span>
          <span className="w-[20px] flex">
            {r.i ? <svg width="16" height="16" viewBox="0 0 16 16" className="overflow-visible">{navIcons[r.i]}</svg> : <Folder />}
          </span>
          <span>{r.t}</span>
        </div>
      ))}
    </div>
    <div className="h-[26px] shrink-0 flex items-start border-b border-r border-l border-[#c4c4c4]">
      <span className="w-[39px] h-[25px] bg-white flex items-center justify-center border-r border-[#c4c4c4]">
        <svg width="18" height="18" viewBox="0 0 18 18"><path d="M1 5h6l1 2h6v9H1z" fill="#efc13c" stroke="#b58a1f" /><rect x="8" y="1" width="9" height="7" fill="#fff" stroke="#3f78c0" /><path d="M7 12l6 0-3 5z" fill="#d04030" /></svg>
      </span>
      <span className="w-[38px] h-[22px] bg-[#ececec] flex items-center justify-center border-r border-b border-[#c4c4c4]">
        <svg width="14" height="11" viewBox="0 0 16 12"><ellipse cx="8" cy="6" rx="7" ry="4.500" fill="#dfe6ee" stroke="#3a4f7a" /><circle cx="8" cy="6" r="2.500" fill="#23407e" /></svg>
      </span>
      <span className="w-[39px] h-[22px] bg-[#ececec] flex items-center justify-center border-r border-b border-[#c4c4c4]">
        <svg width="14" height="10" viewBox="0 0 14 10"><rect width="9" height="10" rx="1" fill="#555" /><path d="M9 5l5-4v8z" fill="#555" /></svg>
      </span>
    </div>
  </div>
);

const colX = [658, 760, 862, 964, 1066];
const rowY = [225, 322, 420, 517, 614];
const panelX: [number, number, number, number][] = [
  [654, 693, 654, 693], [721, 799, 718, 803], [824, 901, 820, 905], [926, 1003, 922, 1007], [1033, 1071, 1032, 1071],
];
const panelY: [number, number][] = [[222, 259], [283, 362], [379, 459], [476, 555], [580, 616]];

const Node = ({ x, y }: { x: number; y: number }) => (
  <g>
    <rect x={x - 4} y={y - 3} width="3" height="3" fill="#f01020" />
    <rect x={x + 2} y={y - 3} width="3" height="3" fill="#f01020" />
    <rect x={x - 4} y={y + 3} width="3" height="3" fill="#f01020" />
    <rect x={x + 2} y={y + 3} width="3" height="3" fill="#f01020" />
    <path d={`M${x - 13} ${y - 2}h12`} stroke="#22ee40" strokeWidth="1.500" />
    <path d={`M${x - 13} ${y - 2}l4 -2.500v5z`} fill="#22ee40" />
    <path d={`M${x} ${y - 4}v15`} stroke="#22dc50" strokeWidth="1.800" />
    <path d={`M${x - 3} ${y + 11}h6`} stroke="#22ee40" strokeWidth="1.200" />
    <rect x={x - 1.500} y={y - 4} width="3" height="2.500" fill="#d8a030" />
  </g>
);
const Cross = ({ x, y }: { x: number; y: number }) => (
  <path d={`M${x - 4} ${y}h8M${x} ${y - 4}v8`} stroke="#ee4477" strokeWidth="1.100" />
);

const Viewport = () => {
  const crosses: [number, number][] = [
    [673, 240], [760, 240], [862, 240], [964, 240], [1051, 240],
    [673, 323], [673, 420], [673, 517], [1051, 323], [1051, 420], [1051, 517],
    [673, 598], [760, 598], [862, 598], [964, 598], [1051, 598],
  ];
  return (
    <svg viewBox="303 106 1248 700" width="1248" height="700" className="block shrink-0 bg-white">
      <defs>
        <pattern id="pg" width="3.500" height="3.500" patternUnits="userSpaceOnUse">
          <rect width="3.500" height="3.500" fill="#5390cc" />
          <path d="M0 0H3.500M0 0V3.500" stroke="#3f93da" strokeWidth=".5" />
        </pattern>
        <pattern id="dots" x="642" y="212" width="3.500" height="5.500" patternUnits="userSpaceOnUse">
          <rect width="1.100" height="1.100" fill="#666" />
        </pattern>
      </defs>
      <rect x="642" y="212" width="441" height="416" fill="url(#dots)" />
      <rect x="654" y="222" width="417" height="394" fill="#8c8c8c" />
      {panelY.map(([y0, y1], r) =>
        panelX.map(([a, b, c, d], k) => {
          const outer = r === 0 || r === 4;
          const x0 = outer ? c : a;
          const x1 = outer ? d : b;
          return (
            <g key={`${r}-${k}`}>
              <rect x={x0} y={y0} width={x1 - x0} height={y1 - y0} fill="url(#pg)" />
              <path d={`M${x0} ${y0}H${x1}M${x0} ${y1}H${x1}`} stroke="#2e96e0" strokeWidth="1" />
              {[0.17, 0.34, 0.5, 0.66, 0.83].map((f) => (
                <path key={f} d={`M${x0 + (x1 - x0) * f} ${y0}V${y1}`} stroke="#2f8fd8" strokeWidth=".8" />
              ))}
            </g>
          );
        }),
      )}
      {colX.map((x) => <path key={x} d={`M${x} 222V616`} stroke="#b4b4b4" strokeWidth=".7" opacity=".6" />)}
      {rowY.map((y) => <path key={y} d={`M654 ${y}H1071`} stroke="#b4b4b4" strokeWidth=".7" opacity=".5" />)}
      <path d="M654.500 259V283M654.500 362V379M654.500 459V476M654.500 555V580M1070.500 259V283M1070.500 362V379M1070.500 459V476M1070.500 555V580" stroke="#333" strokeDasharray="1 1" />
      {colX.slice(1, 4).map((x) => [322, 420, 517].map((y) => (
        <path key={`${x}${y}`} d={`M${x - 16} ${y - 14}H${x + 16}M${x - 16} ${y + 14}H${x + 16}`} stroke="#2f8fe0" strokeWidth=".9" />
      )))}
      {crosses.map(([x, y]) => <Cross key={`${x}-${y}`} x={x} y={y} />)}
      {rowY.map((y) => colX.map((x) => <Node key={`${x}-${y}`} x={x === 658 ? 659 : x === 1066 ? 1065 : x} y={y} />))}
      <rect x="926.500" y="379.500" width="76" height="79" fill="none" stroke="#1cdc3c" strokeWidth="2" />
      <rect x="947.500" y="403.500" width="35" height="32" fill="none" stroke="#8a2be2" strokeWidth="2" />
      {/* dimensions */}
      <g stroke="#cfcfcf" fill="#c4c4c4" strokeWidth="1">
        <path d="M613 225V262M613 293V372M613 388V468M613 486V565M613 582V614" fill="none" />
        {rowY.map((y) => <path key={y} d={`M610 ${y - 1.500}H655M610 ${y + 1.500}H645`} fill="none" />)}
        {rowY.slice(0, 4).map((y) => <path key={y} d={`M610 ${y + 8}l3-6 3 6zM610 ${y + 90}l3 6 3-6z`} />)}
        <path d="M656 656H692M726 656H794M828 656H896M930 656H998M1032 656H1070" fill="none" />
        <path d="M655 616V660M658 616V660M1071 616V660M1066 616V660M760 616V660M862 616V660M964 616V660" fill="none" />
        {[658, 760, 862, 964].map((x) => <path key={x} d={`M${x + 2} 656l6-3v6zM${x + 100} 656l-6-3v6z`} />)}
      </g>
      {[273, 371, 467, 565].map((y) => (
        <text key={y} x={613} y={y} fontSize="8.500" fill="#c8c8c8" textAnchor="middle" transform={`rotate(-90 613 ${y})`} dy="3">6.750 m</text>
      ))}
      {[709, 811, 913, 1015].map((x) => <text key={x} x={x} y={659} fontSize="8.500" fill="#c8c8c8" textAnchor="middle">6.750 m</text>)}
      {[["2", 233], ["3", 330], ["4", 426]].map(([t, y]) => <text key={t} x={1159} y={(y as number) + 3} fontSize="8" fill="#d8d8d8" textAnchor="middle">{t}</text>)}
      <path d="M1066 227H1090" stroke="#e81818" strokeWidth="1.600" /><path d="M1098 227l-9-3v6z" fill="#e81818" />
      <circle cx="1066" cy="227" r="3" fill="#e8d820" />
      <path d="M1066 229v22" stroke="#22d040" strokeWidth="1.200" />
      <text x="1106" y="230" fontSize="9" fill="#e81818" textAnchor="middle">X</text>
      {/* axis */}
      <path d="M362 744H394" stroke="#e81818" strokeWidth="2.600" /><path d="M402 744l-10-4v8z" fill="#e81818" />
      <path d="M362 748v20" stroke="#16d016" strokeWidth="2.400" /><path d="M362 780l-4-10h8z" fill="#16d016" />
      <path d="M359 757h6l-3 4 3 3h-6l3-3z" fill="#1c2cc8" />
      <path d="M358.500 769h7" stroke="#111" strokeWidth="1" />
      <circle cx="362" cy="744" r="3.500" fill="#e8d820" />
      <text x="412" y="748" fontSize="10" fill="#e81818" textAnchor="middle">X</text>
      <text x="361.500" y="770" fontSize="8" fill="#1c2cc8" textAnchor="middle" fontWeight="700">Z</text>
      <text x="361.500" y="791" fontSize="10" fill="#16d016" textAnchor="middle">Y</text>
      {/* view cube */}
      <rect x="1447" y="128" width="70" height="94" rx="2" fill="#d0d0d0" />
      <rect x="1447" y="189" width="70" height="33" fill="#959595" />
      <path d="M1448 128V222M1465 128V222M1499 128V222M1516 128V222M1447 129H1517M1447 144H1517M1447 173.500H1517M1447 189.500H1517M1447 197H1517M1447 213.500H1517M1447 221H1517" stroke="#777" strokeWidth="2" fill="none" />
      <text x="1482" y="166" fontSize="16" fontWeight="700" fill="#3c3f96" textAnchor="middle">+Z</text>
      <text x="1482" y="209" fontSize="11" fontWeight="700" fill="#5c9a5c" textAnchor="middle">-Y</text>
    </svg>
  );
};

const Badge = ({ k }: { k: "u" | "s" }) =>
  k === "u" ? (
    <span className="w-[30px] h-[13px] bg-[#c96b6b] text-white flex items-center justify-center shrink-0 leading-none">ULS</span>
  ) : (
    <span className="w-[30px] h-[13px] bg-[#7fa83c] text-white flex items-center justify-center shrink-0 leading-none">S Qp</span>
  );

const Check = () => (
  <svg width="14" height="14" viewBox="0 0 14 14"><rect x=".5" y=".5" width="13" height="13" fill="#fff" stroke="#555" /><path d="M3 7l3 3 5-6" fill="none" stroke="#444" strokeWidth="1.200" /></svg>
);

const cols = ["w-[55px]", "w-[305px]", "w-[70px]", "w-[300px]", "w-[220px]", "w-[85px]", "flex-1"];

const Table = () => (
  <div className="flex-1 min-h-0 bg-white border-t border-[#c4c4c4] border-b flex flex-col">
    <div className="h-[9px] flex bg-[#e0e0e0] shrink-0">
      {cols.map((c, i) => <div key={i} className={`${c} border-r border-[#eeeeee]`} />)}
    </div>
    <div className="h-[33px] flex bg-[#f0f0f0] border-y border-[#f8f8f8] border-b-[#d0d0d0] shrink-0 text-center leading-[13px]">
      <div className={`${cols[0]} border-r border-[#d0d0d0] flex flex-col justify-center pl-[6px]`}><span>Návrhová</span><span>situace</span></div>
      <div className={`${cols[1]} border-r border-[#d0d0d0] flex flex-col justify-center pl-[6px]`}><span>EN 1990 | DIN | 2012-08</span><span>Typ návrhové situace</span></div>
      <div className={`${cols[2]} border-r border-[#d0d0d0] flex flex-col justify-center pl-[2px]`}><span>Pro</span><span>posouzení</span></div>
      <div className={`${cols[3]} border-r border-[#d0d0d0] flex flex-col justify-center pl-[2px]`}><span>EN 1992 | CEN | 2014-11</span><span>Typ návrhové situace</span></div>
      <div className={`${cols[4]} border-r border-[#d0d0d0] flex flex-col justify-end pb-[2px]`}>Kombinace pro posouzení</div>
      <div className={`${cols[5]} border-r border-[#d0d0d0] flex flex-col justify-end pb-[2px]`}>Možnosti</div>
      <div className={`${cols[6]} flex flex-col justify-end pb-[2px] pr-[3px]`}>Komentář</div>
    </div>
    {[
      { n: "NS1", k: "u" as const, a: "MSÚ (STR/GEO) - trvalá a dočasná - rovn. 6.10", b: "MSÚ (STR/GEO) - trvalá a dočasná" },
      { n: "NS2", k: "s" as const, a: "MSP - kvazistálá", b: "MSP - kvazistálá" },
    ].map((r, i) => (
      <div key={r.n} className="h-4 flex border-b border-[#d8d8d8] shrink-0 leading-none">
        <div className={`${cols[0]} bg-[#eaeaea] border-r border-[#d0d0d0] flex items-center justify-center pl-[6px]`}>{r.n}</div>
        <div className={`${cols[1]} border-r border-[#d0d0d0] pl-[7px] flex items-center ${i === 1 ? "bg-[#f3f7ec]" : ""}`}>
          <div className={`flex items-center gap-[6px] h-full w-full pl-px ${i === 0 ? "border border-dotted border-black" : "border border-transparent"}`}><Badge k={r.k} /><span>{r.a}</span></div>
        </div>
        <div className={`${cols[2]} border-r border-[#d0d0d0] flex items-center justify-center`}><Check /></div>
        <div className={`${cols[3]} border-r border-[#d0d0d0] pl-[6px] flex items-center gap-[4px]`}><Badge k={r.k} /><span>{r.b}</span></div>
        <div className={`${cols[4]} border-r border-[#d0d0d0] pl-[4px] flex items-center`}>Vše</div>
        <div className={`${cols[5]} border-r border-[#d0d0d0]`} />
        <div className={cols[6]} />
      </div>
    ))}
    <div className="flex-1 min-h-0 flex"><div className="w-[55px] bg-[#f7f7f7]" /></div>
  </div>
);

const tabs: [string, string][] = [
  ["Objekty pro posouzení", "w-[135px]"], ["Materiály", "w-[62px]"], ["Tloušťky", "w-[61px]"], ["Konfigurace mezních stavů únosnosti", "w-[209px]"], ["Plochy", "w-[59px]"],
];

const Bottom = () => (
  <div className="flex-1 min-h-0 flex flex-col pb-[3px]">
    <div className="h-[21px] mt-px bg-[#d9e6f3] flex items-center pl-[6px] pr-[8px] shrink-0">
      <span className="text-[11.400px] font-semibold text-[#333] flex-1">Návrhové situace | Posouzení železobetonových konstrukcí | EN 1992 | CEN | 2014-11</span>
      <WinBtns />
    </div>
    <div className="h-[21px] flex items-center pl-[8px] pt-[3px] shrink-0 border-b border-[#e4e4e4]">
      <span className="w-[58px]">Přejít na</span><span className="w-[51px]">Úpravy</span><span className="w-[45px]">Výběr</span><span className="w-[58px]">Zobrazit</span><span>Nastavení</span>
    </div>
    <div className="h-[27px] flex items-center w-[873px] shrink-0 border-r border-[#d8d8d8]">
      <div className="w-[200px] ml-px h-[23px] bg-[#e6e8f2] flex items-center pl-[7px] pr-[3px] gap-[3px]">
        <Ico n="cube3" s={16} /><span className="flex-1 truncate">Posouzení železobetonových...</span><Chev />
      </div>
      <span className="w-4 h-[23px] bg-[#e6e8f2] flex items-center justify-center ml-px"><Tri d="l" /></span>
      <span className="w-4 h-[23px] bg-[#dcdce4] flex items-center justify-center"><Tri d="r" c="#555" /></span>
      <Tool tokens="s5 s3 i s1" />
      <div className="w-[271px] h-[23px] bg-[#e6e8f2] flex items-center pl-[5px] pr-[5px] gap-[3px]">
        <Ico n="tb4" s={16} /><span className="flex-1">Vstupní údaje</span><Chev />
      </div>
      <span className="w-[15px] h-[23px] bg-[#e0e0e8] flex items-center justify-center ml-px"><Tri d="l" c="#555" /></span>
      <span className="w-[15px] h-[23px] bg-[#e6e8f2] flex items-center justify-center"><Tri d="r" c="#555" /></span>
      <Tool tokens="s5 i s2 *sel1 *sel2 s1 le2 lg2 i s2 s1 gb1 gb2 gb3 gb4 s3 i s2 xls s3 i s2 globe s3 i s1 hand" />
    </div>
    <Table />
    <div className="h-[22px] flex items-start shrink-0 border-b border-[#c4c4c4]">
      <div className="w-[120px] h-[21px] flex items-center shrink-0">
        <span className="w-[18px] flex justify-center"><svg width="9" height="9" viewBox="0 0 9 9"><path d="M1 0v9h1V0zM8 0v9L3 4.500z" fill="#999" /></svg></span>
        <span className="w-[18px] flex justify-center"><Tri d="l" c="#999" /></span>
        <span className="w-[48px] text-center">1 z 6</span>
        <span className="w-[18px] flex justify-center"><Tri d="r" c="#666" /></span>
        <span className="w-[16px] flex justify-center"><svg width="9" height="9" viewBox="0 0 9 9"><path d="M1 0v9l5-4.500zM7 0v9h1V0z" fill="#666" /></svg></span>
      </div>
      <div className="w-[103px] h-[22px] bg-white border-x border-[#c4c4c4] flex items-center justify-center shrink-0 z-10">Návrhové situace</div>
      {tabs.map(([t, w]) => (
        <div key={t} className={`${w} h-[21px] bg-[#f0f0f0] border-r border-[#c4c4c4] flex items-center justify-center shrink-0`}>{t}</div>
      ))}
    </div>
  </div>
);

const StatusCell = ({ t, w }: { t: string; w: string }) => (
  <span className={`${w} h-[17px] flex items-center justify-center shrink-0 border-l border-t border-[#c8c8c8] border-r border-r-[#c8c8c8]`}>{t}</span>
);

export default function App() {
  return (
    <div className="w-[1551px] h-[1039px] overflow-hidden bg-[#f5f5f5] flex flex-col text-[11px] text-[#111] font-['Noto_Sans','Open_Sans',sans-serif] border-l border-[#707070]">
      <div className="h-px flex shrink-0">
        <div className="w-[591px] bg-[#6b6b6b]" /><div className="w-[97px] bg-[#e6e6e6]" /><div className="w-[48px] bg-[#0078d4]" /><div className="w-[97px] bg-[#e6e6e6]" /><div className="flex-1 bg-[#6b6b6b]" />
      </div>
      <div className="h-[30px] bg-white flex items-center shrink-0 pl-[7px]">
        <svg width="16" height="16" viewBox="0 0 16 16"><path d="M1 9l8-8 6 3 0 4-8 7-5-2z" fill="#56647c" /><path d="M4 7l6-5 4 2-6 6z" fill="#c2cad8" /><path d="M7 6l5-4M10 8l4-4" stroke="#56647c" strokeWidth=".7" /><circle cx="4" cy="12" r="3" fill="#e0b94a" stroke="#8a6d1f" strokeWidth=".5" /></svg>
        <span className="ml-[6px] text-[#111] tracking-[-0.1px]">Dlubal RFEM | 6.01.0008 | TS 45_END_2021-04-29.rf6</span>
        <div className="ml-auto flex items-center mr-px">
          <span className="w-[44px] flex justify-center"><svg width="10" height="2" viewBox="0 0 10 2"><rect width="10" height="1" fill="#111" /></svg></span>
          <span className="w-[46px] flex justify-center"><svg width="10" height="10" viewBox="0 0 10 10"><rect x=".5" y=".5" width="9" height="9" fill="none" stroke="#111" /></svg></span>
          <span className="w-[46px] flex justify-center"><svg width="11" height="11" viewBox="0 0 11 11"><path d="M.5.5l10 10M10.500.5l-10 10" stroke="#111" /></svg></span>
        </div>
      </div>
      <div className="h-[21px] flex items-center shrink-0 border-b border-[#e2e2e2]">
        <span className="w-6 flex"><Logo /></span>
        {menus.map(([m, w]) => <span key={m} className={w}>{m}</span>)}
        <span className="ml-auto tracking-[-0.07px]">Online License 32 | Hana Karoušová | Dlubal Software s.r.o.</span>
        <span className="flex items-center gap-[3px] ml-[9px] mr-[2px]">
          <span className="w-[15px] h-[17px] bg-[#fbfbfb] border border-[#e8e8e8] flex items-end justify-center pb-[3px]"><span className="w-[7px] h-[2px] bg-[#555]" /></span>
          <span className="w-[15px] h-[17px] bg-[#fbfbfb] border border-[#e8e8e8] flex items-center justify-center"><svg width="9" height="9" viewBox="0 0 9 9"><path d="M.5 3h5.500v5.500H.5zM3 3V.5h5.500V6H6" fill="none" stroke="#555" /></svg></span>
          <span className="w-[15px] h-[17px] bg-[#fbfbfb] border border-[#e8e8e8] flex items-center justify-center"><svg width="8" height="8" viewBox="0 0 8 8"><path d="M1 1l6 6M7 1L1 7" stroke="#555" strokeWidth="1.500" /></svg></span>
        </span>
      </div>
      <div className="h-[27px] flex items-center shrink-0 border-b border-[#e2e2e2] pl-px overflow-hidden">
        <span className="w-1.5 shrink-0 h-full flex justify-center items-center"><span className="h-[22px] border-l border-dotted border-[#999]" /></span>
        <Tool tokens="s2 newdoc open cee cubeI hand save print v newrep | undo u s2 redo u | s1 *win *tbl docg con sc lst g s1 para cir tgt blob yel g s1 conn1 conn2 s1" />
        <div className="w-[270px] h-[23px] bg-[#e6e8f2] flex items-center pl-[5px] pr-[4px] shrink-0">
          <span className="w-[11px] h-[11px] bg-[#cdfdff] mr-[3px]" /><span className="w-[11px] h-[11px] bg-[#f6c400] mr-[3px]" />
          <span className="w-[30px] h-[13px] bg-[#c96b6b] text-white flex items-center justify-center leading-none">ULS</span>
          <span className="ml-[5px] w-[31px]">KZ1</span>
          <span className="w-px h-[18px] bg-[#fafafa] mr-[6px]" />
          <span className="flex-1">1.35G1 + 1.35G2 + 1.50QI ...</span><Chev />
        </div>
        <span className="w-[14px] h-[23px] bg-[#e6e8f2] flex items-center justify-center ml-0.5 shrink-0"><Tri d="l" /></span>
        <span className="w-[14px] h-[23px] bg-[#e6e8f2] flex items-center justify-center ml-px shrink-0"><Tri d="r" /></span>
        <Tool tokens="fil v s1 eyeb xc le lg ge v le2 lg2 | s2 wb aba v g magx cube1 cube2 i ax1 ax2 ax3 ax4 v micro u" />
        <span className="ml-auto"><Tool tokens="»" /></span>
      </div>
      <div className="h-[27px] flex items-center shrink-0 overflow-hidden">
        <span className="w-[5px] shrink-0 h-full flex justify-center items-center"><span className="h-[22px] border-l border-dotted border-[#999]" /></span>
        <Tool tokens="star s3 v line s1 mem v clp v | sup sup2 sup3 | s2 dimx v dimxx | surf v surf2 v s1 opn v sol2 v box i s1 s1 pin s3 brg brgg brg2 tri v dash v g s1 filw i s5 s1 g1 g2 g3 g4 g5 g6 i s3 w1 w2 w3 w4 w5 w6 s2 i s5 gset u g s1" />
        <div className="w-[126px] h-[23px] bg-[#e6e8f2] flex items-center pl-[5px] pr-[3px] shrink-0">
          <span className="w-[11px] h-[11px] bg-[#cdfdff] mr-[5px]" /><span className="flex-1">1 - Globální XYZ</span><Chev />
        </div>
        <Tool tokens="s1 cs s3 i s2 hg hg2 *vw1 vw2 vw3 s2 i s3 gn1 gn2 gn3 » g tb3 v »" />
      </div>
      <div className="flex-1 min-h-0 flex">
        <Navigator />
        <div className="flex-1 min-w-0 flex flex-col ml-[2px]">
          <Viewport />
          <Bottom />
        </div>
      </div>
      <div className="h-[21px] flex items-start pl-[675px] pt-[2px] shrink-0 border-b border-[#707070]">
        <StatusCell t="ÚCHOP" w="w-[47px]" />
        <StatusCell t="RASTR" w="w-[43px]" />
        <StatusCell t="LRASTR" w="w-[50px]" />
        <StatusCell t="OUCHOP" w="w-[54px]" />
        <span className="w-[105px] h-[17px] border-r border-t border-[#e0e0e0]" />
        <span className="w-[105px] h-[17px] border-r border-t border-[#e0e0e0]" />
        <span className="w-[156px] h-[17px] flex items-center pl-[6px] border-r border-t border-[#e0e0e0]">SS: Globální XYZ</span>
        <span className="w-[67px] h-[17px] flex items-center pl-[6px] border-r border-t border-[#e0e0e0]">Rovina: XY</span>
      </div>
    </div>
  );
}
